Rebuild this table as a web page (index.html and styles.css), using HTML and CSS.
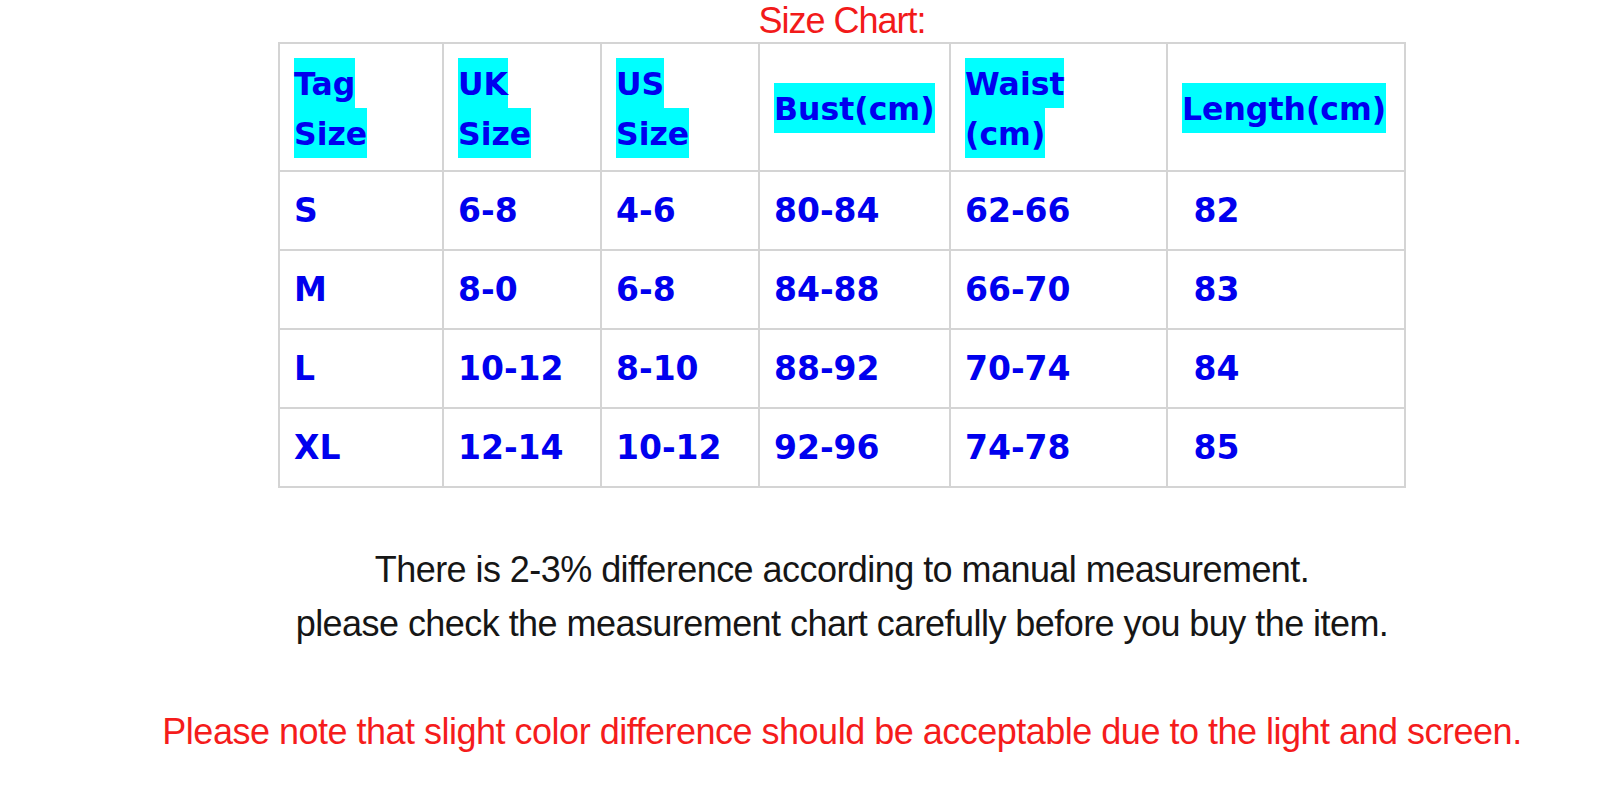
FILE: index.html
```html
<!DOCTYPE html>
<html lang="en">
<head>
<meta charset="utf-8">
<title>Size Chart</title>
<link rel="stylesheet" href="styles.css">
</head>
<body>
<div class="page">
  <div class="title">Size Chart:</div>
  <table class="chart">
    <colgroup>
      <col class="c1"><col class="c2"><col class="c3"><col class="c4"><col class="c5"><col class="c6">
    </colgroup>
    <tr class="head">
      <td><span class="hl">Tag<br>Size</span></td>
      <td><span class="hl">UK<br>Size</span></td>
      <td><span class="hl">US<br>Size</span></td>
      <td><span class="hl">Bust(cm)</span></td>
      <td><span class="hl">Waist<br>(cm)</span></td>
      <td><span class="hl">Length(cm)</span></td>
    </tr>
    <tr class="row">
      <td>S</td><td>6-8</td><td>4-6</td><td>80-84</td><td>62-66</td><td>&nbsp;82</td>
    </tr>
    <tr class="row">
      <td>M</td><td>8-0</td><td>6-8</td><td>84-88</td><td>66-70</td><td>&nbsp;83</td>
    </tr>
    <tr class="row">
      <td>L</td><td>10-12</td><td>8-10</td><td>88-92</td><td>70-74</td><td>&nbsp;84</td>
    </tr>
    <tr class="row last">
      <td>XL</td><td>12-14</td><td>10-12</td><td>92-96</td><td>74-78</td><td>&nbsp;85</td>
    </tr>
  </table>
  <p class="note">There is 2-3% difference according to manual measurement.<br>please check the measurement chart carefully before you buy the item.</p>
  <p class="warn">Please note that slight color difference should be acceptable due to the light and screen.</p>
</div>
</body>
</html>
```

FILE: styles.css
```css
html, body {
  margin: 0;
  padding: 0;
  background: #ffffff;
}

.page {
  padding-left: 66px;
  text-align: center;
  font-family: "Liberation Sans", Arial, sans-serif;
}

.title {
  color: #f21a1a;
  font-size: 36px;
  line-height: 42px;
  letter-spacing: -1px;
}

.chart {
  margin: 0 auto;
  border-collapse: collapse;
  table-layout: fixed;
  width: 1126px;
  text-align: left;
  font-family: "DejaVu Sans", Verdana, sans-serif;
  font-weight: bold;
  font-size: 33px;
  color: #0000ee;
}

.c1 { width: 164px; }
.c2 { width: 158px; }
.c3 { width: 158px; }
.c4 { width: 191px; }
.c5 { width: 217px; }
.c6 { width: 238px; }

.chart td {
  border: 2px solid #d4d4d4;
  padding: 0 0 0 14px;
  vertical-align: middle;
}

.head td {
  height: 122px;
  padding-top: 4px;
  font-size: 31.5px;
  line-height: 50px;
}

.row td {
  height: 77px;
}

.hl {
  background: #00ffff;
  padding: 8px 0 5.5px 0;
}

.note {
  margin: 55px 0 0 0;
  font-size: 36px;
  line-height: 54px;
  letter-spacing: -0.55px;
  color: #161616;
}

.warn {
  margin: 54px 0 0 0;
  font-size: 36px;
  line-height: 54px;
  letter-spacing: -0.5px;
  color: #f51c1c;
}
```
